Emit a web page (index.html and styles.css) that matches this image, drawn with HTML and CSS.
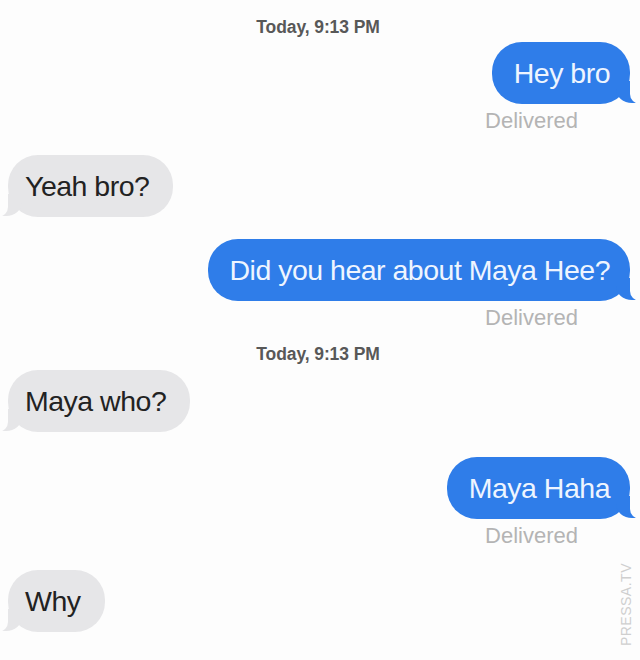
FILE: index.html
```html
<!DOCTYPE html>
<html>
<head>
<meta charset="utf-8">
<link rel="stylesheet" href="styles.css">
</head>
<body>
<div class="chat">
  <div class="stamp stamp-first">Today, 9:13 PM</div>
  <div class="row row-sent row-first-sent"><div class="bubble sent">Hey bro</div></div>
  <div class="status">Delivered</div>
  <div class="row row-recv gap-big"><div class="bubble recv">Yeah bro?</div></div>
  <div class="row row-sent gap-big"><div class="bubble sent">Did you hear about Maya Hee?</div></div>
  <div class="status">Delivered</div>
  <div class="stamp stamp-mid">Today, 9:13 PM</div>
  <div class="row row-recv gap-small"><div class="bubble recv">Maya who?</div></div>
  <div class="row row-sent gap-mid"><div class="bubble sent">Maya Haha</div></div>
  <div class="status">Delivered</div>
  <div class="row row-recv gap-big"><div class="bubble recv">Why</div></div>
  <div class="watermark">PRESSA.TV</div>
</div>
</body>
</html>
```
FILE: styles.css
```css
html, body {
  margin: 0;
  padding: 0;
  background: #fdfdfd;
}
body {
  font-family: "Liberation Sans", Arial, sans-serif;
  width: 640px;
  height: 660px;
  overflow: hidden;
}
.chat {
  position: relative;
  height: 660px;
  display: flex;
  flex-direction: column;
}
.stamp {
  text-align: center;
  font-size: 17.5px;
  line-height: 20px;
  font-weight: bold;
  color: #585858;
  letter-spacing: -0.1px;
  padding-right: 4px;
}
.stamp-first { margin-top: 17px; }
.stamp-mid { margin-top: 14px; }
.row {
  display: flex;
}
.row-sent {
  justify-content: flex-end;
  padding-right: 10px;
}
.row-recv {
  justify-content: flex-start;
  padding-left: 8px;
}
.row-first-sent { margin-top: 5px; }
.gap-big { margin-top: 22px; }
.gap-mid { margin-top: 25px; }
.gap-small { margin-top: 6px; }
.bubble {
  position: relative;
  font-size: 28.5px;
  line-height: 34px;
  padding: 14px 20px 14px 22px;
  border-radius: 30px;
  letter-spacing: -0.5px;
}
.sent {
  background: #2f7de9;
  color: #eef5ff;
}
.recv {
  background: #e6e6e8;
  color: #222;
  padding-left: 17px;
  padding-right: 24px;
}
.sent::before {
  content: "";
  position: absolute;
  bottom: 0;
  right: -8px;
  height: 22px;
  border-right: 22px solid #2f7de9;
  border-bottom-left-radius: 16px 14px;
  transform: translate(0, -1px);
}
.sent::after {
  content: "";
  position: absolute;
  bottom: 0;
  right: -26px;
  width: 26px;
  height: 24px;
  background: #fdfdfd;
  border-bottom-left-radius: 10px;
}
.recv::before {
  content: "";
  position: absolute;
  bottom: 0;
  left: -8px;
  height: 22px;
  border-left: 22px solid #e6e6e8;
  border-bottom-right-radius: 16px 14px;
  transform: translate(0, -1px);
}
.recv::after {
  content: "";
  position: absolute;
  bottom: 0;
  left: -26px;
  width: 26px;
  height: 24px;
  background: #fdfdfd;
  border-bottom-right-radius: 10px;
}
.status {
  align-self: flex-end;
  margin-right: 62px;
  margin-top: 5px;
  font-size: 22px;
  line-height: 24px;
  color: #b4b4b4;
}
.watermark {
  position: absolute;
  right: 6px;
  top: 563px;
  writing-mode: vertical-rl;
  transform: rotate(180deg);
  font-size: 14px;
  letter-spacing: 0.5px;
  color: #cfcfcf;
}
```
